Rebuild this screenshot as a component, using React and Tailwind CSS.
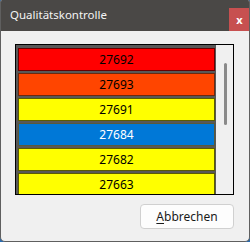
import React from "react";

const ITEMS = [
  { id: "27692", bg: "bg-[#ff0000]", border: "border-[#6a0000]", text: "text-black" },
  { id: "27693", bg: "bg-[#ff4500]", border: "border-[#6a2a10]", text: "text-black" },
  { id: "27691", bg: "bg-[#ffff00]", border: "border-[#5c5c00]", text: "text-black" },
  { id: "27684", bg: "bg-[#0078d7]", border: "border-[#5a5a3a]", text: "text-white" },
  { id: "27682", bg: "bg-[#ffff00]", border: "border-[#5c5c00]", text: "text-black" },
  { id: "27663", bg: "bg-[#ffff00]", border: "border-[#5c5c00]", text: "text-black" },
];

export default function App() {
  return (
    <div
      className="w-[250px] h-[242px] bg-[#2a6cb0] overflow-hidden"
      style={{ fontFamily: '"Noto Sans", "Open Sans", Arial, sans-serif' }}
    >
      <div className="w-full h-full flex flex-col rounded-t-[2px] rounded-b-[5px] overflow-hidden bg-[#f0f0f0] border-x border-b border-[#5f5f5f]">
        {/* Title bar */}
        <div className="h-[31px] shrink-0 bg-[#4a4846] flex items-start justify-between -mx-px">
          <span className="pl-[10px] pt-[7px] text-[11.5px] leading-[16px] text-[#f4f4f4]">
            Qualitätskontrolle
          </span>
          <div className="mt-[8px] w-[21px] h-[23px] bg-[#c75050] flex items-center justify-center text-white text-[11px] font-bold leading-none">
            x
          </div>
        </div>

        {/* Content */}
        <div className="flex flex-col pl-[14px] pr-[15px] pt-[13px]">
          <div className="h-[151px] border border-black flex">
            <div className="flex-1 bg-[#585858] pl-[2px] pr-px pt-[3px] flex flex-col gap-[2px] overflow-hidden">
              {ITEMS.map((item) => (
                <div
                  key={item.id}
                  className={`h-[23px] shrink-0 border ${item.bg} ${item.border} ${item.text} flex items-center justify-center text-[12px]`}
                >
                  {item.id}
                </div>
              ))}
            </div>
            <div className="w-[17px] bg-[#f0f0f0] flex justify-center pt-[18px] pl-px">
              <div className="w-[3px] h-[62px] bg-[#8a8a8a] rounded-full" />
            </div>
          </div>

          <div className="flex justify-end mt-[9px]">
            <button className="w-[94px] h-[25px] bg-[#fdfdfd] border border-[#d0d0d0] rounded-[4px] text-[12px] text-[#1a1a1a] flex items-center justify-center">
              <span>
                <span className="underline underline-offset-2">A</span>bbrechen
              </span>
            </button>
          </div>
        </div>
      </div>
    </div>
  );
}
